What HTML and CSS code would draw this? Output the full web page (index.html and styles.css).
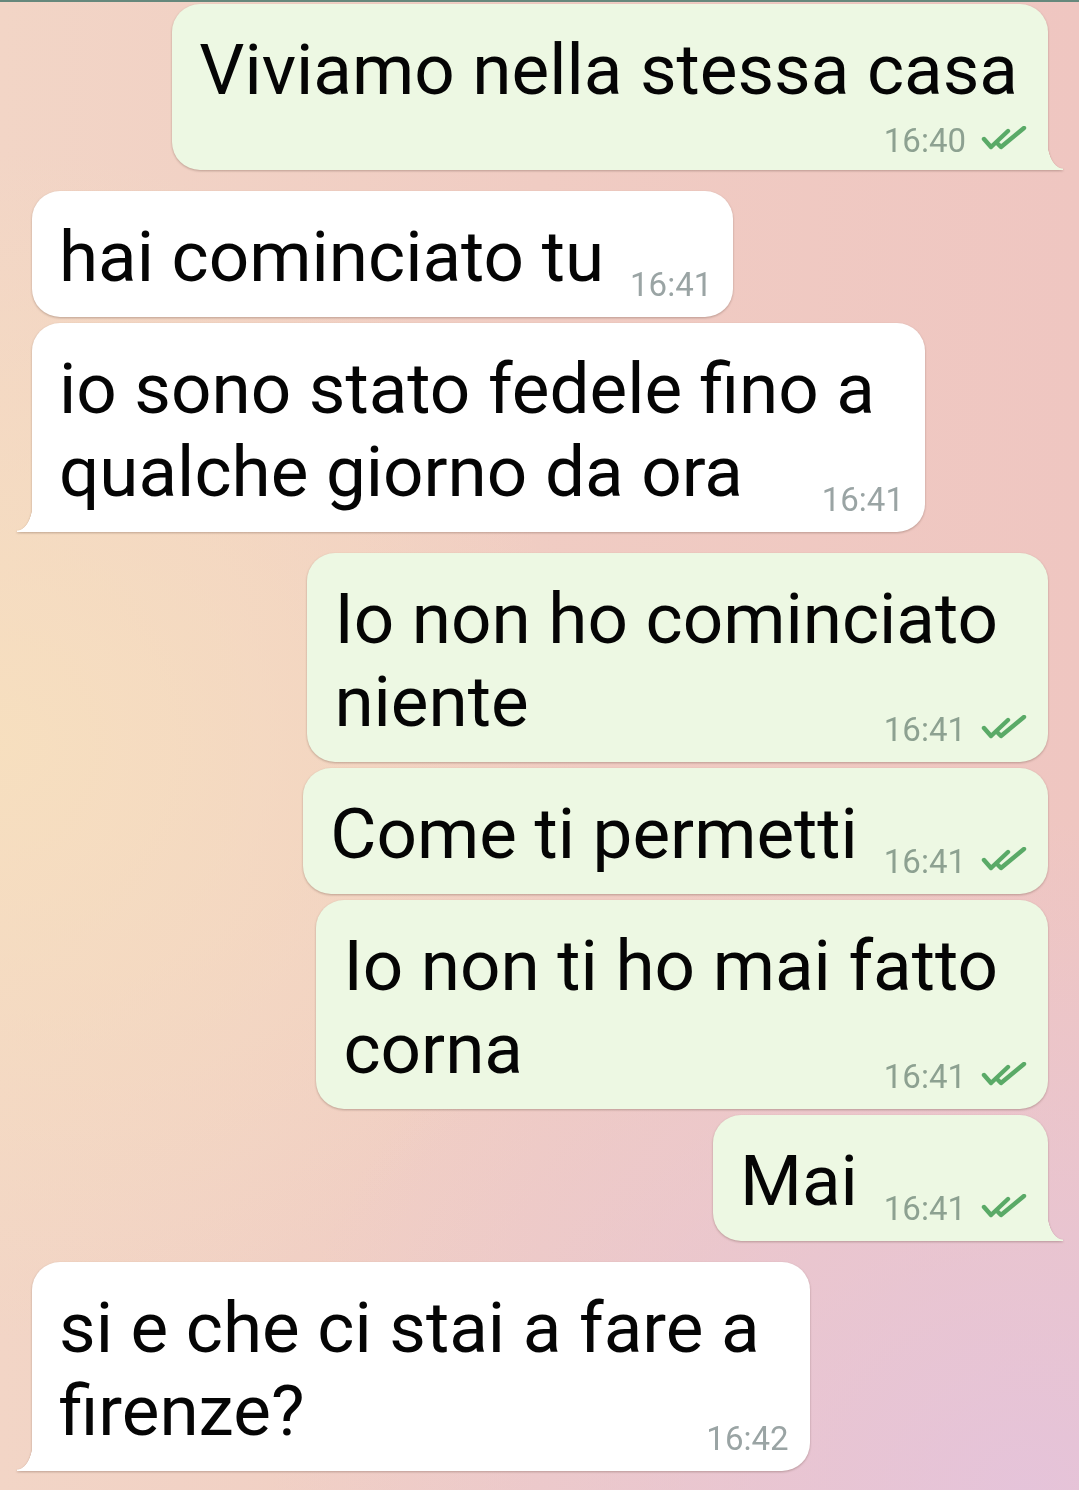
FILE: index.html
```html
<!DOCTYPE html>
<html lang="it">
    <head>
        <meta charset="UTF-8">
        <meta name="viewport" content="width=device-width, initial-scale=1.0">
        <title>chat</title>
        <link rel="stylesheet" href="styles.css">
    </head>
    <body>
        <div class="appbar-edge"></div>

        <main class="chat">
            <section class="group out">
                <div class="bubble tail stacked">
                    <div class="line">Viviamo nella stessa casa</div>
                    <div class="meta">16:40 <svg class="ticks" viewBox="0 0 46 24"><path d="M3 13 L10 21 L27 5"/><path d="M17 18 L20 21 L43 2"/></svg></div>
                </div>
            </section>

            <section class="group in">
                <div class="bubble">
                    <div class="last"><span>hai cominciato tu</span><span class="meta">16:41</span></div>
                </div>
                <div class="bubble tail">
                    <div class="line">io sono stato fedele fino a</div>
                    <div class="last"><span>qualche giorno da ora</span><span class="meta">16:41</span></div>
                </div>
            </section>

            <section class="group out">
                <div class="bubble">
                    <div class="line">Io non ho cominciato</div>
                    <div class="last"><span>niente</span><span class="meta">16:41 <svg class="ticks" viewBox="0 0 46 24"><path d="M3 13 L10 21 L27 5"/><path d="M17 18 L20 21 L43 2"/></svg></span></div>
                </div>
                <div class="bubble">
                    <div class="last"><span>Come ti permetti</span><span class="meta">16:41 <svg class="ticks" viewBox="0 0 46 24"><path d="M3 13 L10 21 L27 5"/><path d="M17 18 L20 21 L43 2"/></svg></span></div>
                </div>
                <div class="bubble">
                    <div class="line">Io non ti ho mai fatto</div>
                    <div class="last"><span>corna</span><span class="meta">16:41 <svg class="ticks" viewBox="0 0 46 24"><path d="M3 13 L10 21 L27 5"/><path d="M17 18 L20 21 L43 2"/></svg></span></div>
                </div>
                <div class="bubble tail">
                    <div class="last"><span>Mai</span><span class="meta">16:41 <svg class="ticks" viewBox="0 0 46 24"><path d="M3 13 L10 21 L27 5"/><path d="M17 18 L20 21 L43 2"/></svg></span></div>
                </div>
            </section>

            <section class="group in">
                <div class="bubble tail">
                    <div class="line">si e che ci stai a fare a</div>
                    <div class="last"><span>firenze?</span><span class="meta">16:42</span></div>
                </div>
            </section>
        </main>
    </body>
</html>
```

FILE: styles.css
```css
html, body {
    margin: 0;
    height: 100%;
}
body {
    font-family: Roboto, "Noto Sans", sans-serif;
    color: #050505;
    overflow: hidden;
    background:
        radial-gradient(ellipse 70% 45% at 95% 100%, rgba(228, 195, 220, 0.9), rgba(228, 195, 220, 0) 100%),
        radial-gradient(ellipse 55% 40% at 0% 50%, rgba(247, 224, 190, 0.9), rgba(247, 224, 190, 0) 100%),
        linear-gradient(90deg, #f2d5c6 0%, #f0ccc3 50%, #efc6c1 100%);
}
.appbar-edge {
    height: 2px;
    background: #66887c;
}
.chat {
    display: flex;
    flex-direction: column;
    gap: 21px;
    padding: 2px 31px 0 32px;
}
.group {
    display: flex;
    flex-direction: column;
    gap: 6px;
}
.group.out {
    align-items: flex-end;
    --bubble: #edf8e3;
}
.group.in {
    align-items: flex-start;
    --bubble: #ffffff;
}
.bubble {
    position: relative;
    background: var(--bubble);
    border-radius: 28px;
    padding: 24px 21px 19px 27px;
    font-size: 71px;
    line-height: 83px;
    white-space: nowrap;
    filter: drop-shadow(0 1px 0.8px rgba(90, 60, 50, 0.35));
}
.line {
    padding-right: 29px;
}
.last {
    display: flex;
    align-items: flex-end;
    justify-content: space-between;
    gap: 26px;
}
.meta {
    display: flex;
    align-items: center;
    gap: 15px;
    font-size: 33px;
    line-height: 40px;
    color: #8da191;
}
.in .meta {
    color: #9aa4a4;
}
.last .meta {
    margin-bottom: -7px;
}
.stacked .line {
    padding-right: 9px;
}
.stacked .meta {
    justify-content: flex-end;
    margin: 10px 0 -10px;
}
.ticks {
    width: 46px;
    height: 24px;
    margin-bottom: 6px;
    fill: none;
    stroke: #5aaa67;
    stroke-width: 4.4;
    stroke-linecap: round;
    stroke-linejoin: round;
}

/* tail on the last bubble of a group */
.out .tail {
    border-bottom-right-radius: 0;
}
.in .tail {
    border-bottom-left-radius: 0;
}
.tail::after {
    content: "";
    position: absolute;
    bottom: 0;
    width: 16px;
    height: 30px;
}
.out .tail::after {
    right: -15px;
    background: radial-gradient(ellipse 16px 29px at 100% 0, transparent 97%, var(--bubble) 100%);
}
.in .tail::after {
    left: -15px;
    background: radial-gradient(ellipse 16px 29px at 0 0, transparent 97%, var(--bubble) 100%);
}
```
